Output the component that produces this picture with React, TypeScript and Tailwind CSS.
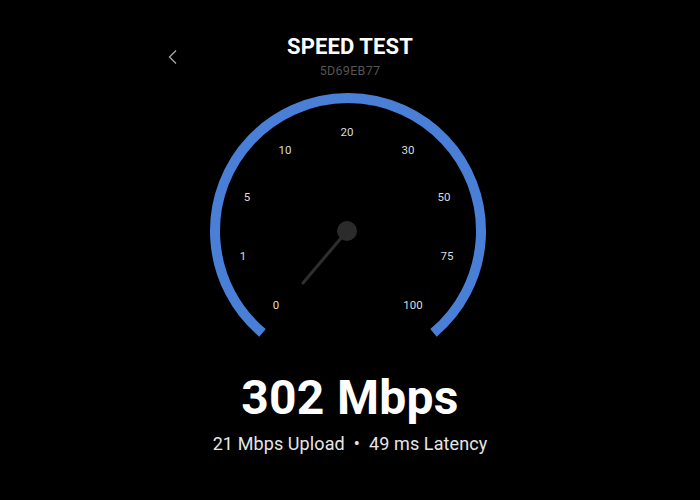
import React from "react";

const CX = 148;
const CY = 141;
const R = 133;

function pt(deg: number, r: number) {
  const a = (deg * Math.PI) / 180;
  return [CX + r * Math.sin(a), CY - r * Math.cos(a)];
}

const [sx, sy] = pt(-140, R);
const [ex, ey] = pt(140, R);

const labels: [string, number, number][] = [
  ["0", -72, 74],
  ["1", -105, 25],
  ["5", -101, -34],
  ["10", -63, -81],
  ["20", -1, -99],
  ["30", 60, -81],
  ["50", 96, -34],
  ["75", 99, 25],
  ["100", 65, 74],
];

export default function App() {
  return (
    <div
      className="w-[700px] h-[500px] bg-black flex flex-col items-center overflow-hidden"
      style={{ fontFamily: "Roboto, 'Noto Sans', sans-serif" }}
    >
      <div className="relative w-full flex flex-col items-center pt-[32px]">
        <svg
          className="absolute left-[167px] top-[49px]"
          width="12"
          height="16"
          viewBox="0 0 12 16"
        >
          <path d="M9 1.5 L2.5 8 L9 14.5" fill="none" stroke="#a8a8a8" strokeWidth="1.3" />
        </svg>
        <div className="text-white font-bold text-[22px] leading-[28px] tracking-[0.1px] mt-[1px]">SPEED TEST</div>
        <div className="text-[#555555] text-[12.5px] leading-[16px] tracking-[0.3px] mt-[2px]">5D69EB77</div>
      </div>
      <svg width="300" height="256" viewBox="0 0 300 256" className="mt-[11px]">
        <path
          d={`M ${sx} ${sy} A ${R} ${R} 0 1 1 ${ex} ${ey}`}
          fill="none"
          stroke="#4a7fd7"
          strokeWidth="10"
        />
        {labels.map(([t, dx, dy]) => (
          <text
            key={t}
            x={CX + dx}
            y={CY + dy}
            textAnchor="middle"
            dominantBaseline="central"
            fill="#dcdcdc"
            fontSize="11.5"
            fontFamily="Roboto, sans-serif"
          >
            {t}
          </text>
        ))}
        <line x1={CX - 1} y1={CY} x2={CX - 45} y2={CY + 52} stroke="#2e2e2e" strokeWidth="3" strokeLinecap="round" />
        <circle cx={CX - 1} cy={CY} r="10" fill="#2b2b2b" />
      </svg>
      <div className="text-white font-bold text-[48px] leading-[56px] mt-[24px] tracking-[0.3px]">302 Mbps</div>
      <div className="text-[#e6e6e6] text-[18px] leading-[24px] mt-[6px] flex items-center tracking-[0.1px]">
        <span>21 Mbps Upload</span>
        <span className="mx-[9px]">•</span>
        <span>49 ms Latency</span>
      </div>
    </div>
  );
}
